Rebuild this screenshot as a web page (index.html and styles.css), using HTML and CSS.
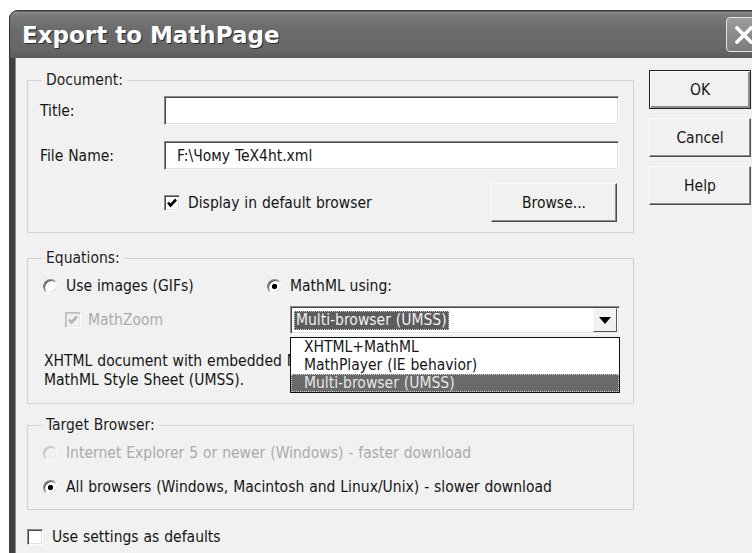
FILE: index.html
```html
<!DOCTYPE html>
<html lang="en">
<head>
<meta charset="utf-8">
<title>Export to MathPage</title>
<link rel="stylesheet" href="styles.css">
</head>
<body>
<div class="window">
  <div class="titlebar">
    <span class="title">Export to MathPage</span>
    <span class="close" aria-label="Close">
      <svg width="18" height="18" viewBox="0 0 18 18"><path d="M2 2 L16 16 M16 2 L2 16" stroke="#fff" stroke-width="3.6" stroke-linecap="square"/></svg>
    </span>
  </div>

  <div class="client">
    <div class="main">
      <fieldset class="group doc">
        <legend>Document:</legend>
        <div class="body">
          <div class="row field">
            <label class="lbl">Title:</label>
            <span class="edit"></span>
          </div>
          <div class="row field second">
            <label class="lbl">File Name:</label>
            <span class="edit">F:\Чому TeX4ht.xml</span>
          </div>
          <div class="row opts">
            <span class="check on">
              <svg width="12" height="12" viewBox="0 0 12 12"><path d="M2 5.5 L4.5 8.5 L10 2.5" fill="none" stroke="#000" stroke-width="2.6"/></svg>
            </span>
            <span class="cap">Display in default browser</span>
            <button class="btn browse">Browse...</button>
          </div>
        </div>
      </fieldset>

      <fieldset class="group eq">
        <legend>Equations:</legend>
        <div class="body">
          <div class="eq-grid">
            <div class="opt"><span class="radio"></span><span class="cap">Use images (GIFs)</span></div>
            <div class="opt"><span class="radio on"></span><span class="cap">MathML using:</span></div>
            <div class="opt zoom disabled">
              <span class="check dis">
                <svg width="12" height="12" viewBox="0 0 12 12"><path d="M2 5.5 L4.5 8.5 L10 2.5" fill="none" stroke="#b4b4b4" stroke-width="2.6"/></svg>
              </span>
              <span class="cap">MathZoom</span>
            </div>
            <div class="combo-wrap">
              <div class="combo">
                <span class="sel">Multi-browser (UMSS)</span>
                <span class="arrow"><svg width="12" height="7" viewBox="0 0 12 7"><path d="M0 0 H12 L6 7 Z" fill="#000"/></svg></span>
              </div>
              <ul class="droplist">
                <li>XHTML+MathML</li>
                <li>MathPlayer (IE behavior)</li>
                <li class="hi">Multi-browser (UMSS)</li>
              </ul>
            </div>
          </div>
          <p class="desc">XHTML document with embedded MathML and the Universal<br>MathML Style Sheet (UMSS).</p>
        </div>
      </fieldset>

      <fieldset class="group target">
        <legend>Target Browser:</legend>
        <div class="body">
          <div class="opt disabled"><span class="radio dis"></span><span class="cap">Internet Explorer 5 or newer (Windows) - faster download</span></div>
          <div class="opt second"><span class="radio on"></span><span class="cap">All browsers (Windows, Macintosh and Linux/Unix) - slower download</span></div>
        </div>
      </fieldset>

      <div class="opt defaults"><span class="check"></span><span class="cap">Use settings as defaults</span></div>
    </div>

    <div class="buttons">
      <button class="btn default">OK</button>
      <button class="btn">Cancel</button>
      <button class="btn">Help</button>
    </div>
  </div>
</div>
</body>
</html>
```

FILE: styles.css
```css
html, body {
  margin: 0;
  padding: 0;
  background: #fff;
  overflow: hidden;
}

body {
  width: 752px;
  height: 553px;
  font-family: "DejaVu Sans Condensed", "DejaVu Sans", sans-serif;
  font-stretch: condensed;
  font-size: 15.5px;
  word-spacing: 0.5px;
  color: #151515;
}

/* ---------- window frame ---------- */
.window {
  margin: 10px 0 0 9px;
  width: 760px;
  height: 543px;
  display: flex;
  flex-direction: column;
}

.titlebar {
  flex: none;
  height: 48px;
  box-sizing: border-box;
  display: flex;
  align-items: center;
  justify-content: space-between;
  padding: 0 8px 0 13px;
  border-radius: 9px 9px 0 0;
  background: linear-gradient(#3a3a3a 0, #3a3a3a 1px, #8c8c8c 2px, #7a7a7a 5px, #6c6c6c 18px, #666 40px, #5a5a5a 48px);
  box-shadow: inset 1px 0 0 #2e2e2e;
}

.title {
  font-family: "DejaVu Sans", sans-serif;
  font-stretch: normal;
  font-weight: bold;
  font-size: 23px;
  word-spacing: 0;
  line-height: 1;
  color: #fff;
  text-shadow: 1px 1px 0 #2a2a2a;
  padding-top: 2px;
}

.close {
  width: 35px;
  height: 35px;
  box-sizing: border-box;
  border: 1px solid #e2e2e2;
  border-radius: 4px;
  background: linear-gradient(#9c9c9c, #7c7c7c);
  display: flex;
  align-items: center;
  justify-content: center;
  margin-top: 1px;
}

.client {
  flex: 1;
  background: #f1f1f1;
  border-left: 6px solid #404040;
  box-shadow: inset 1px 0 0 #8c8c8c;
  display: grid;
  grid-template-columns: 607px 102px;
  column-gap: 15px;
  align-items: start;
  padding: 12px 0 0 12px;
}

.main {
  padding-top: 1px;
}

/* ---------- group boxes ---------- */
.group {
  margin: 0;
  padding: 0;
  min-width: 0;
  border: 1px solid #d2d2d2;
}

.group legend {
  margin-left: 14px;
  padding: 0 4px;
  line-height: 18px;
  color: #1e1e1e;
}

.doc .body {
  padding: 7px 14px 10px 11px;
}

.eq {
  margin-top: 16px;
}

.eq .body {
  padding: 9px 14px 13px 15px;
}

.target {
  margin-top: 12px;
}

.target .body {
  padding: 9px 14px 12px 15px;
}

.row {
  display: flex;
  align-items: center;
}

.field.second {
  margin-top: 16px;
}

.lbl {
  width: 124px;
  flex: none;
  padding-left: 1px;
}

.edit {
  flex: 1;
  height: 29px;
  box-sizing: border-box;
  padding-left: 12px;
  display: flex;
  align-items: center;
  background: #fff;
  border: 1px solid;
  border-color: #8a8a8a #fdfdfd #fdfdfd #8a8a8a;
  box-shadow: inset 1px 1px 0 #474747, inset -1px -1px 0 #dedede;
}

.opts {
  margin-top: 13px;
  height: 39px;
}

.opts .check {
  margin-left: 125px;
}

.cap {
  margin-left: 8px;
  white-space: nowrap;
}

/* ---------- check boxes and radios ---------- */
.check {
  width: 16px;
  height: 16px;
  box-sizing: border-box;
  flex: none;
  display: inline-flex;
  align-items: center;
  justify-content: center;
  background: #fff;
  border: 1px solid;
  border-color: #8a8a8a #fdfdfd #fdfdfd #8a8a8a;
  box-shadow: inset 1px 1px 0 #474747, inset -1px -1px 0 #dedede;
}

.check.dis {
  background: #f1f1f1;
  border-color: #bdbdbd #fdfdfd #fdfdfd #bdbdbd;
  box-shadow: inset 1px 1px 0 #c9c9c9, inset -1px -1px 0 #e6e6e6;
}

.radio {
  width: 15px;
  height: 15px;
  box-sizing: border-box;
  flex: none;
  border-radius: 50%;
  border: 1px solid;
  border-color: #8a8a8a #fdfdfd #fdfdfd #8a8a8a;
  box-shadow: inset 1px 1px 0 #474747, inset -1px -1px 0 #dcdcdc;
  background: #fff;
}

.radio.on {
  background: radial-gradient(circle at 50% 50%, #000 0, #000 2.3px, #fff 3px);
}

.radio.dis {
  border-color: #c2c2c2 #fdfdfd #fdfdfd #c2c2c2;
  box-shadow: inset 1px 1px 0 #c8c8c8, inset -1px -1px 0 #e8e8e8;
  background: #f1f1f1;
}

.opt {
  display: flex;
  align-items: center;
  height: 20px;
}

.disabled {
  color: #ababab;
}

/* ---------- equations ---------- */
.eq-grid {
  display: grid;
  grid-template-columns: 224px 1fr;
  row-gap: 10px;
  align-items: center;
}

.opt.zoom {
  margin-left: 22px;
}

.opt.zoom .cap {
  margin-left: 7px;
}

.combo-wrap {
  position: relative;
  margin-left: 23px;
  width: 330px;
}

.combo {
  height: 28px;
  box-sizing: border-box;
  display: flex;
  align-items: center;
  justify-content: space-between;
  padding: 0 5px 0 3px;
  background: #fff;
  border: 1px solid;
  border-color: #8a8a8a #fdfdfd #fdfdfd #8a8a8a;
  box-shadow: inset 1px 1px 0 #474747, inset -1px -1px 0 #dedede;
}

.sel {
  background: #5c5c5c;
  color: #f0f0f0;
  padding: 0 2px;
  line-height: 19px;
  outline: 1px dotted #c8c8c8;
  outline-offset: -1px;
}

.arrow {
  width: 24px;
  height: 24px;
  box-sizing: border-box;
  display: flex;
  align-items: center;
  justify-content: center;
  background: #f1f1f1;
  border: 1px solid;
  border-color: #f8f8f8 #5a5a5a #5a5a5a #f8f8f8;
  margin-right: -3px;
}

.droplist {
  position: absolute;
  left: 0;
  top: calc(100% + 3px);
  width: 330px;
  box-sizing: border-box;
  margin: 0;
  padding: 0;
  list-style: none;
  background: #fff;
  border: 1px solid #111;
  z-index: 2;
}

.droplist li {
  line-height: 18px;
  padding-left: 13px;
  white-space: nowrap;
}

.droplist li.hi {
  background: #6a6a6a;
  color: #e6e6e6;
  outline: 1px dotted #d0d0d0;
  outline-offset: -1px;
}

.desc {
  margin: 18px 0 0 1px;
  line-height: 19px;
  white-space: nowrap;
}

/* ---------- target browser ---------- */
.target .opt.second {
  margin-top: 14px;
}

.defaults {
  margin-top: 17px;
}

.defaults .cap {
  margin-left: 9px;
}

/* ---------- push buttons ---------- */
.buttons {
  display: flex;
  flex-direction: column;
  gap: 9px;
}

.btn {
  font: inherit;
  color: #151515;
  height: 39px;
  box-sizing: border-box;
  background: #f1f1f1;
  border: 1px solid;
  border-color: #fbfbfb #4a4a4a #4a4a4a #fbfbfb;
  box-shadow: inset -1px -1px 0 #8e8e8e;
  padding: 0;
}

.btn.default {
  border-color: #222;
  box-shadow: inset 1px 1px 0 #fbfbfb, inset -2px -2px 0 #8e8e8e;
}

.btn.browse {
  margin-left: auto;
  margin-right: 2px;
  width: 126px;
}
```
